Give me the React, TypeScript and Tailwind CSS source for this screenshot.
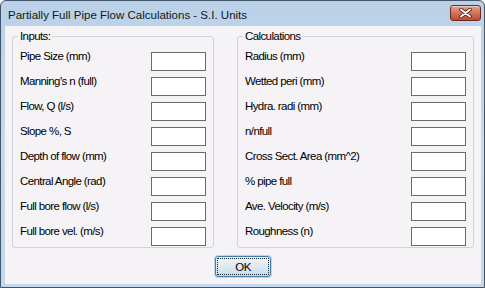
import React from 'react';

const INPUTS = [
  'Pipe Size (mm)',
  "Manning's n (full)",
  'Flow, Q (l/s)',
  'Slope %, S',
  'Depth of flow (mm)',
  'Central Angle (rad)',
  'Full bore flow (l/s)',
  'Full bore vel. (m/s)',
];

const CALCS = [
  'Radius (mm)',
  'Wetted peri (mm)',
  'Hydra. radi (mm)',
  'n/nfull',
  'Cross Sect. Area (mm^2)',
  '% pipe full',
  'Ave. Velocity (m/s)',
  'Roughness (n)',
];

const GroupBox = ({ title, rows, className }: { title: string; rows: string[]; className: string }) => (
  <div className={`relative h-[212px] border border-[#d2d2da] rounded-[3px] pt-[15px] pl-[7px] pr-[7px] flex flex-col gap-[6px] ${className}`}>
    <span className="absolute -top-[8px] left-[5px] px-[2px] bg-[#f5f3f6] leading-[14px]">{title}</span>
    {rows.map((label) => (
      <div key={label} className="flex justify-between items-start h-[19px]">
        <span className="leading-[14px] -mt-[3px] whitespace-nowrap">{label}</span>
        <input
          type="text"
          className="w-[55px] h-[19px] border border-[#6b6b6b] bg-white outline-none px-[2px]"
        />
      </div>
    ))}
  </div>
);

export default function App() {
  return (
    <div className="w-[485px] h-[288px] flex flex-col border border-[#41566b] rounded-t-[6px] bg-gradient-to-b from-[#bad1e8] via-[#c6d9ed] to-[#c2d8ec] pl-[4px] pr-[3px] pb-[3px] text-black text-[11.5px] tracking-[-0.6px] font-['Liberation_Sans',Arial,sans-serif]">
      {/* Title bar */}
      <div className="h-[25px] flex justify-between items-start shrink-0">
        <span className="pl-[3px] pt-[7px] leading-[14px] text-[11.5px] tracking-normal text-[#101820]">
          Partially Full Pipe Flow Calculations - S.I. Units
        </span>
        <button className="mt-[4px] w-[31px] h-[16px] rounded-[3px] border border-[#6e2a20] bg-gradient-to-b from-[#e8a493] via-[#d2735c] to-[#c04a2e] flex items-center justify-center shadow-[inset_0_1px_0_rgba(255,255,255,0.45)]">
          <svg width="13" height="10" viewBox="0 0 13 10">
            <path d="M2 1.5 L11 8.5 M11 1.5 L2 8.5" stroke="#5a2218" strokeWidth="3.6" strokeLinecap="round" />
            <path d="M2 1.5 L11 8.5 M11 1.5 L2 8.5" stroke="#ffffff" strokeWidth="2" strokeLinecap="round" />
          </svg>
        </button>
      </div>

      {/* Client area */}
      <div className="flex-1 bg-[#f5f3f6] pt-[10px] px-[7px] flex flex-col">
        <div className="flex justify-between">
          <GroupBox title="Inputs:" rows={INPUTS} className="w-[202px]" />
          <GroupBox title="Calculations" rows={CALCS} className="w-[237px]" />
        </div>
        <div className="flex justify-center mt-[8px]">
          <button className="w-[56px] h-[21px] rounded-[3px] border border-[#3c7fb1] bg-gradient-to-b from-[#eef4f8] via-[#dde9f1] to-[#c9dcea] p-[1px] shadow-[0_0_0_1px_rgba(120,190,230,0.5)]">
            <span className="w-full h-full flex items-center justify-center border border-dotted border-[#202020] leading-[14px]">
              OK
            </span>
          </button>
        </div>
      </div>
    </div>
  );
}
